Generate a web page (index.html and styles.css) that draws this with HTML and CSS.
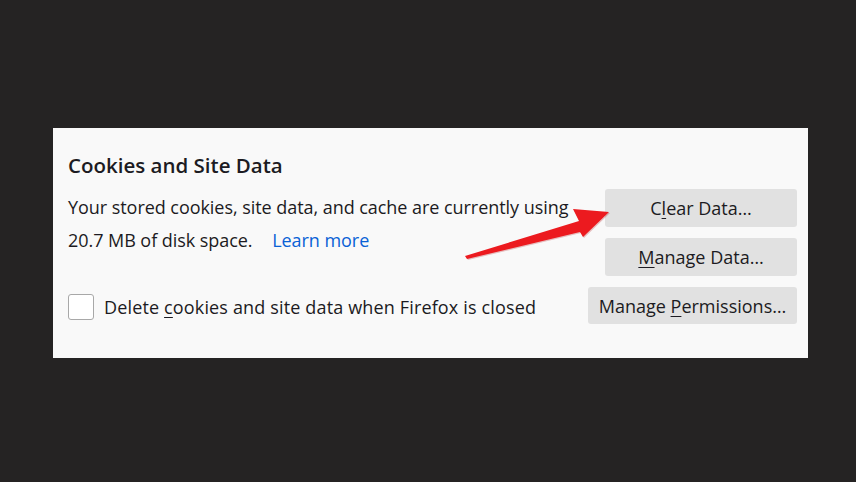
FILE: index.html
```html
<!DOCTYPE html>
<html>
<head>
<meta charset="utf-8">
<link rel="stylesheet" href="styles.css">
</head>
<body>
<div class="panel">
  <h2 class="title">Cookies and Site Data</h2>
  <div class="row top">
    <div class="desc">
      <p class="line">Your stored cookies, site data, and cache are currently using</p>
      <p class="line">20.7 MB of disk space. <a class="link">Learn more</a></p>
    </div>
    <div class="btns">
      <button class="btn w192">C<u>l</u>ear Data…</button>
      <button class="btn w192"><u>M</u>anage Data…</button>
    </div>
  </div>
  <div class="row bottom">
    <label class="check"><span class="box"></span><span class="label">Delete <u>c</u>ookies and site data when Firefox is closed</span></label>
    <button class="btn w209">Manage <u>P</u>ermissions…</button>
  </div>
  <svg class="arrow" width="160" height="60" viewBox="0 0 160 60">
    <polygon points="2,51 116,16 110,4 146,7 120,32 117,27 4,54" fill="#b01014" opacity="0.25" transform="translate(1,1)"/>
    <polygon points="2,51 116,16 110,4 146,7 120,32 117,27 4,54" fill="#ec1a1f"/>
  </svg>
</div>
</body>
</html>
```
FILE: styles.css
```css
html, body { margin: 0; padding: 0; }
body {
  background: #252323;
  width: 856px;
  height: 482px;
  overflow: hidden;
  font-family: "Open Sans", "Noto Sans", sans-serif;
  color: #1c1b22;
}
.panel {
  position: relative;
  margin: 128px 0 0 53px;
  width: 755px;
  height: 230px;
  box-sizing: border-box;
  background: #f9f9f9;
  padding: 24px 11px 0 15px;
}
.title {
  margin: 0;
  font-size: 20.5px;
  font-weight: 600;
  line-height: 26px;
}
.row {
  display: flex;
  justify-content: space-between;
}
.top { margin-top: 11px; }
.desc { padding-top: 2px; }
.line {
  margin: 0;
  font-size: 18px;
  line-height: 33px;
  letter-spacing: -0.05px;
  white-space: nowrap;
}
.link { color: #0a62d6; margin-left: 15px; }
.btns {
  display: flex;
  flex-direction: column;
  gap: 11px;
}
.btn {
  font-family: inherit;
  font-size: 18px;
  color: #1c1b22;
  background: #e1e1e1;
  border: none;
  border-radius: 3px;
  height: 38px;
  padding: 0;
}
.btn u, .check u { text-decoration-thickness: 1px; text-underline-offset: 3px; }
.w192 { width: 192px; }
.w209 { width: 209px; height: 37px; }
.bottom {
  margin-top: 11px;
  align-items: center;
}
.check {
  display: flex;
  align-items: center;
  gap: 10px;
  font-size: 18px;
  padding-top: 3px;
}
.label { letter-spacing: 0.15px; }
.box {
  width: 24px;
  height: 24px;
  border: 1px solid #a8a8a8;
  border-radius: 3px;
  background: #fff;
}
.arrow {
  position: absolute;
  left: 410px;
  top: 77px;
}
```
